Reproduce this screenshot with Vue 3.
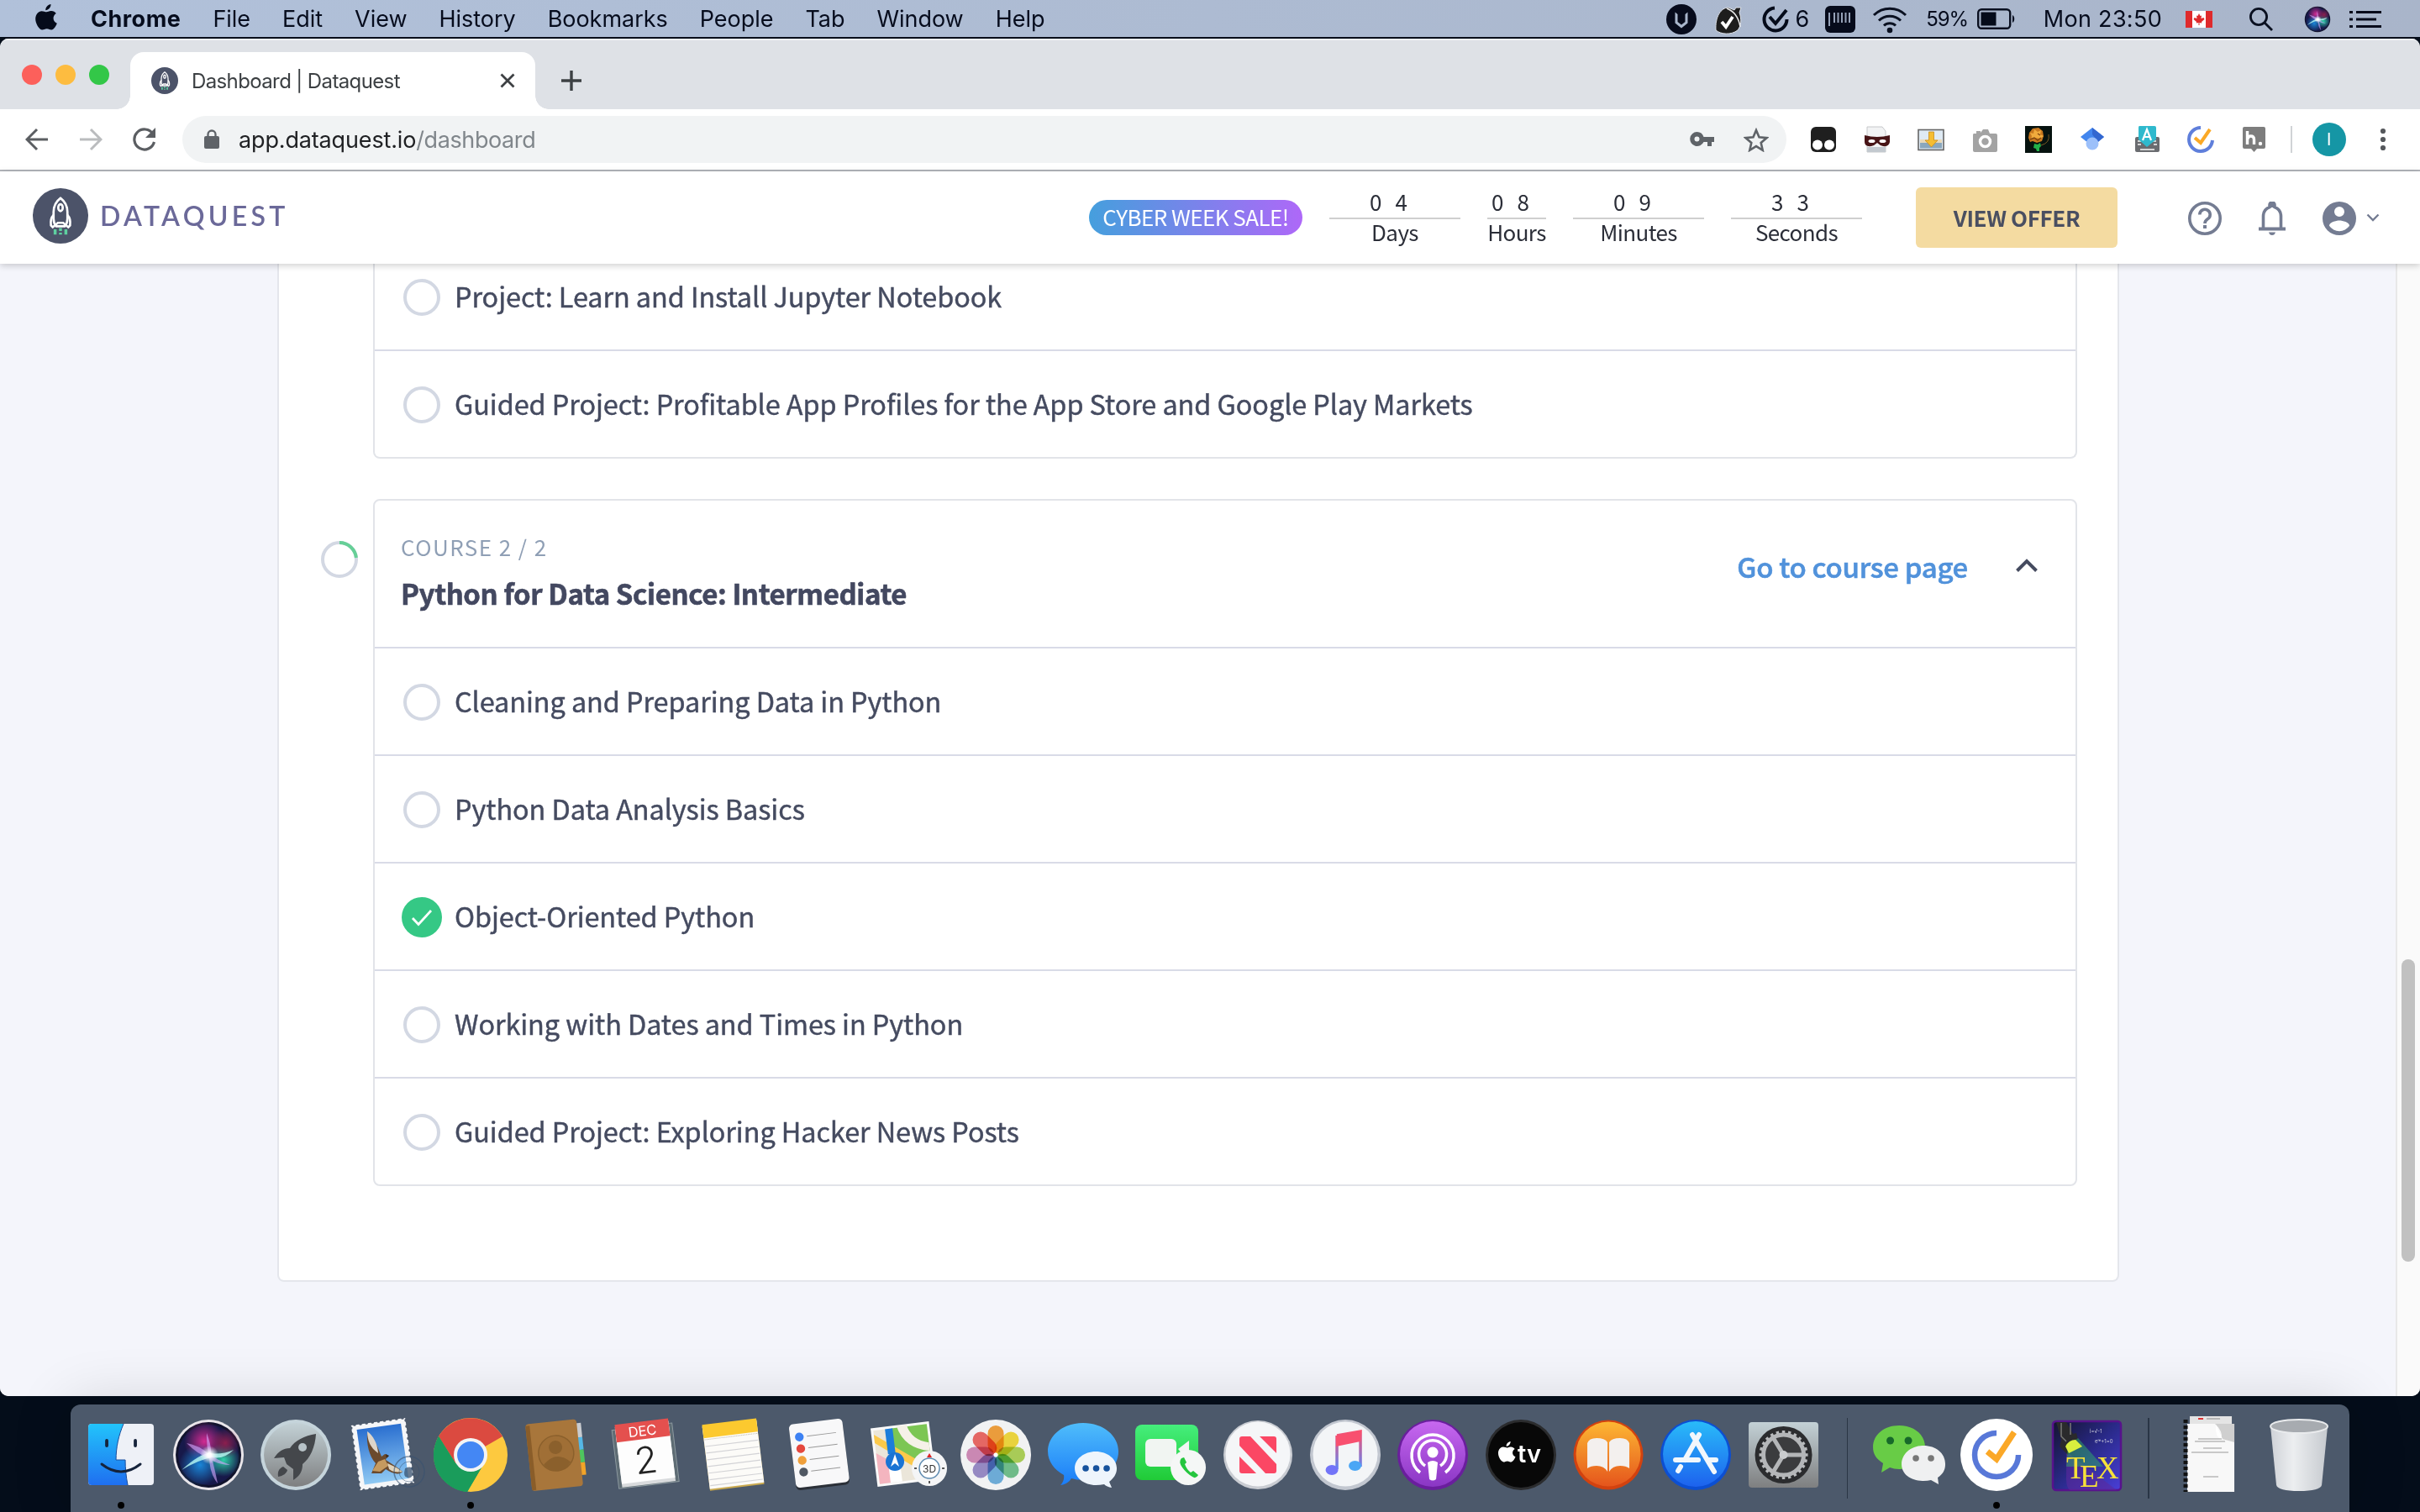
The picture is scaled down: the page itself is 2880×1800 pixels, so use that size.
<script setup>
const menus = ['File', 'Edit', 'View', 'History', 'Bookmarks', 'People', 'Tab', 'Window', 'Help']
const timers = [
  { digits: '04', label: 'Days', cls: 'wide' },
  { digits: '08', label: 'Hours', cls: 'narrow' },
  { digits: '09', label: 'Minutes', cls: 'wide' },
  { digits: '33', label: 'Seconds', cls: 'wide' },
]
const firstCourse = ['Project: Learn and Install Jupyter Notebook', 'Guided Project: Profitable App Profiles for the App Store and Google Play Markets']
const lessons = [
  { title: 'Cleaning and Preparing Data in Python' },
  { title: 'Python Data Analysis Basics' },
  { title: 'Object-Oriented Python', done: true },
  { title: 'Working with Dates and Times in Python' },
  { title: 'Guided Project: Exploring Hacker News Posts' },
]
const teeth = Array.from({ length: 24 }, (_, i) => i * 15)
const petals = ['#f7941d', '#f6d91f', '#a5cf3e', '#5dbb7c', '#5aa7dc', '#8d7cc3', '#cf7bb0', '#f0524d']
const perforation = Array.from({ length: 11 }, (_, i) => i)
</script>

<template>
  <div class="screen">
    <header class="menubar">
      <div class="menus">
        <svg class="apple" width="28" height="34" viewBox="0 0 28 34"><path d="M19.500 0c.3 3.600-2.900 7.200-6.200 7.200C12.900 3.900 16.200.4 19.500 0zM14.300 9.300c1.300 0 3.300-1.500 5.800-1.300 2.300.1 4.400 1.200 5.700 3.100-4.900 3.200-4 9.700 1 11.700-1 3-3.800 7.700-6.500 7.800-2.200.1-2.900-1.300-5.500-1.300s-3.500 1.300-5.600 1.300C5.700 30.500.9 22.900 1.200 17c.3-5.300 3.700-8.700 7.300-8.800 2.400 0 4.500 1.100 5.800 1.100z" fill="#050b1a"/></svg>
        <span class="menu app">Chrome</span>
        <span v-for="m in menus" :key="m" class="menu">{{ m }}</span>
      </div>
      <div class="status">
        <svg width="36" height="36" viewBox="0 0 36 36"><circle cx="18" cy="18" r="18" fill="#070b1c"/><path d="M10.500 9.500v13l7.500 6 7.500-6v-13l-3 2.500v9l-4.500 3.500-4.500-3.500v-9z" fill="#a9b6cc"/></svg>
        <svg class="s-hat" width="34" height="36" viewBox="0 0 34 36"><path d="M2 31C1 15 8 4 17 4l7 3 2-3h6l-2 6c3 8 2 16-2 21-8 6-20 5-26 0z" fill="#1d1d1d" stroke="#dfe3ea" stroke-width="1"/><path d="M15 5c8 3 14 10 16 22" stroke="#e9e9e9" stroke-width="1.500" fill="none"/><path d="M9 21l5 6 8-12" fill="none" stroke="#fff" stroke-width="3.800"/></svg>
        <svg class="s-tick" width="34" height="34" viewBox="0 0 34 34"><path d="M16 3.500A13.500 13.500 0 1 0 30.500 17" fill="none" stroke="#050b1a" stroke-width="4"/><path d="M10 14l7 8L30 6" fill="none" stroke="#050b1a" stroke-width="4"/></svg>
        <span class="six">6</span>
        <svg class="s-bar" width="36" height="32" viewBox="0 0 36 32"><rect width="36" height="32" rx="6" fill="#060b1b"/><path d="M5 8v16M11 8v12M15.500 8v12M20 8v12M24.500 8v12M29 8v12" stroke="#96a2b8" stroke-width="2"/></svg>
        <svg class="s-wifi" width="42" height="34" viewBox="0 0 42 34" fill="none" stroke="#0a1020" stroke-width="3"><path d="M2 12a27 27 0 0 1 38 0M8 18.500a18.500 18.500 0 0 1 26 0M14 24.500a10 10 0 0 1 14 0"/><circle cx="21" cy="30" r="1.800" fill="#0a1020"/></svg>
        <span class="pct">59%</span>
        <svg class="s-bat" width="46" height="26" viewBox="0 0 46 26"><rect x="1.200" y="1.200" width="38" height="22.600" rx="4" fill="none" stroke="#0a1020" stroke-width="2.400"/><rect x="4.500" y="4.500" width="18" height="16" fill="#050b1a"/><path d="M42 8c3 1 3 8 0 9z" fill="#0a1020"/></svg>
        <span class="clock">Mon 23:50</span>
        <svg class="s-flag" width="32" height="20" viewBox="0 0 32 20"><path fill="#fff" d="M0 0h32v20H0z"/><path fill="#df2a2c" d="M0 0h8v20H0zM24 0h8v20h-8zM16 3l1.500 3 1.500-.5-.5 3.500 3-1 1 2-3.500 3 .3 1.500-2.800-.5V17h-1v-3l-2.800.5.3-1.500-3.500-3 1-2 3 1-.5-3.500 1.500.5z"/></svg>
        <svg class="s-search" width="30" height="30" viewBox="0 0 30 30" fill="none" stroke="#0a1020" stroke-width="2.800"><circle cx="12" cy="12" r="9.600"/><path d="M19 19l9 9"/></svg>
        <svg class="s-siri" width="32" height="32" viewBox="11 11 82 82"><use href="#orb"/></svg>
        <svg width="38" height="22" viewBox="0 0 38 22"><path fill="#060b1b" d="M0 1h4v3H0zM8 1h30v3H8zM0 9.500h4v3H0zM8 9.500h24v3H8zM0 18h4v3H0zM8 18h30v3H8z"/></svg>
      </div>
    </header>

    <section class="window">
      <div class="tabstrip">
        <div class="lights"><i class="red"></i><i class="yellow"></i><i class="green"></i></div>
        <div class="tab">
          <svg width="32" height="32" viewBox="0 0 64 64"><use href="#dq"/></svg>
          <span class="tab-title">Dashboard | Dataquest</span>
          <svg class="tab-x" width="18" height="18" viewBox="0 0 18 18"><path d="M1.500 1.500l15 15m0-15l-15 15" stroke="#3d4043" stroke-width="2.800"/></svg>
        </div>
        <svg class="plus" width="24" height="24" viewBox="0 0 24 24"><path d="M12 0v24M0 12h24" stroke="#3c4043" stroke-width="3.400"/></svg>
      </div>

      <div class="toolbar">
        <svg width="28" height="28" viewBox="0 0 28 28" fill="none" stroke="#5b5e62" stroke-width="3"><path d="M27 14H3M14 2L2 14l12 12"/></svg>
        <svg class="fwd" width="28" height="28" viewBox="0 0 28 28" fill="none" stroke="#babcbe" stroke-width="3"><path d="M1 14h24M14 2l12 12-12 12"/></svg>
        <svg class="reload" width="28" height="28" viewBox="0 0 28 28" fill="none" stroke="#5b5e62" stroke-width="3.200"><path d="M24 7.500A12 12 0 1 0 25.500 17"/><path d="M27 0v12H15z" fill="#5b5e62" stroke="none"/></svg>
        <div class="omnibox">
          <svg width="18" height="24" viewBox="0 0 18 24"><rect y="8" width="18" height="15" rx="2" fill="#5f6368"/><path d="M4.500 9V6a4.500 4.500 0 0 1 9 0v3" fill="none" stroke="#5f6368" stroke-width="2.300"/></svg>
          <span class="url"><b>app.dataquest.io</b>/dashboard</span>
          <svg class="key" width="30" height="18" viewBox="0 0 30 18"><path fill="#5f6368" fill-rule="evenodd" d="M8.500 0a8.500 8.500 0 0 1 8 6H29v6h-3v5h-5v-5h-4.500A8.500 8.500 0 1 1 8.500 0zm0 5.500a3 3 0 1 0 0 6 3 3 0 0 0 0-6z"/></svg>
          <svg class="star" width="30" height="29" viewBox="0 0 30 29"><path d="M15 3l3.500 8.300 9 .8-6.800 5.900 2 8.800-7.700-4.700-7.700 4.700 2-8.800L2.500 12.100l9-.8z" fill="none" stroke="#5f6368" stroke-width="2.600"/></svg>
        </div>
        <div class="extensions">
          <svg width="32" height="32" viewBox="0 0 32 32"><rect x="1" y="1" width="30" height="30" rx="6" fill="#1f1f1f"/><circle cx="9" cy="22.500" r="6" fill="#fff"/><circle cx="23" cy="22.500" r="6" fill="#fff"/></svg>
          <svg width="32" height="32" viewBox="0 0 32 32"><path d="M4 1h18l4 5v25H4z" fill="#f2f3f4" stroke="#c6c8ca"/><path d="M4 25h22v6H4z" fill="#c3c9cf"/><path d="M1 11q15 4 30 0v8q-1 6-8 5-4-1-7-4-3 3-7 4-8 1-8-5z" fill="#471416"/><ellipse cx="9.500" cy="18" rx="4" ry="2" fill="#fff"/><ellipse cx="22.500" cy="18" rx="4" ry="2" fill="#fff"/></svg>
          <svg width="32" height="32" viewBox="0 0 32 32"><rect x="1" y="4.500" width="30" height="24" fill="#dfeaf4" stroke="#666" stroke-width="1.600"/><rect x="3" y="19" width="26" height="7.500" fill="#8aa7bd"/><path d="M3 16h26v4H3z" fill="#e9d9b8"/><path d="M13.500 7h6v10h4.500l-7.500 8-7.500-8h4.500z" fill="#f5bd32" stroke="#c98e1c" stroke-width=".8"/></svg>
          <svg width="32" height="32" viewBox="0 0 32 32"><path d="M3 9h3V6h5v2l3-4h6l2 5h7a2 2 0 0 1 2 2v18a2 2 0 0 1-2 2H4a2 2 0 0 1-2-2V11q0-2 1-2z" fill="#a3a3a3"/><circle cx="16.500" cy="18.500" r="6" fill="none" stroke="#fff" stroke-width="3.500"/></svg>
          <svg width="32" height="32" viewBox="0 0 32 32"><path d="M0 0h32v32H0z" fill="#06120f"/><path d="M4 14l1-6 4-5 7-1 5 4 1 6-2 6-6 2-5-2-3 1z" fill="#c8781f"/><path d="M6 8l4 1 1-5 4 3 4-2-1 5 4 2-4 3-6-1-5 2 1-4z" fill="#f0ab3d"/><path d="M6 16l5-2 4 3 4-3M15 9l3 2" stroke="#7d430f" stroke-width="1.400" fill="none"/><path d="M11 21l4 1 3-2 1 4-2 2v4h-3l-1-3-3-1z" fill="#23b04a"/><path d="M28 10q2 10-9 13" stroke="#7b5a24" fill="none"/></svg>
          <svg width="32" height="32" viewBox="0 0 32 32"><path d="M16 2l14 11-14 11L2 13z" fill="#4286ee"/><path d="M16 2l14 11-7 6-7-9z" fill="#3367d0"/><circle cx="16" cy="21" r="7.500" fill="#9cc0fa"/></svg>
          <svg width="32" height="32" viewBox="0 0 32 32"><rect x="2" y="13" width="29" height="18" rx="2" fill="#6a6c70"/><path d="M5 18h4m2 0h3m9 0h4M5 22h4m15 0h4M8 28h17" stroke="#d5d5d5" stroke-width="2.200"/><path d="M7 0h18a2 2 0 0 1 2 2v14L16 25 6 16V2q0-2 1-2z" fill="#2fb9cd"/><path d="M11 17l5-13 5 13M13 13h6" stroke="#fff" stroke-width="2.200" fill="none"/></svg>
          <svg width="32" height="32" viewBox="0 0 64 64"><path d="M32 4a28 28 0 1 0 28 30" fill="none" stroke="#5f7fdb" stroke-width="8"/><path d="M18 28l14 12L54 8" fill="none" stroke="#fba926" stroke-width="8"/></svg>
          <svg width="32" height="32" viewBox="0 0 32 32"><path d="M4 1h23a2 2 0 0 1 2 2v22a2 2 0 0 1-2 2h-8l-3.500 4L12 27H4a2 2 0 0 1-2-2V3q0-2 2-2z" fill="#7d7d7d"/><path d="M7.500 6v16M7.500 16q1-4 4-4 4 0 4 4v6" stroke="#fff" stroke-width="3.400" fill="none"/><circle cx="23" cy="21" r="2.200" fill="#fff"/></svg>
        </div>
        <i class="bar-sep"></i>
        <span class="profile">I</span>
        <svg class="dots" width="8" height="28" viewBox="0 0 8 28" fill="#55585c"><circle cx="4" cy="4" r="3.100"/><circle cx="4" cy="14" r="3.100"/><circle cx="4" cy="24" r="3.100"/></svg>
      </div>

      <div class="site-header">
        <svg width="66" height="66" viewBox="0 0 64 64"><use href="#dq"/></svg>
        <span class="brand">DATAQUEST</span>
        <span class="pill">CYBER WEEK SALE!</span>
        <div class="timers">
          <div v-for="t in timers" :key="t.label" class="timer" :class="t.cls">
            <span class="digits">{{ t.digits }}</span>
            <span class="unit">{{ t.label }}</span>
          </div>
        </div>
        <span class="offer">VIEW OFFER</span>
        <svg class="help" width="40" height="40" viewBox="0 0 40 40" fill="none" stroke="#747c92" stroke-width="3.600"><circle cx="20" cy="20" r="18.200"/><path d="M13.800 15.500a6.200 6.200 0 1 1 9.400 5.300c-2 1.300-3.200 2.300-3.200 5.200"/><path d="M18 28h4v4h-4z" fill="#747c92" stroke="none"/></svg>
        <svg class="bell" width="32" height="40" viewBox="0 0 32 40"><path d="M5.500 32V17.500q0-8 7.500-11V4a3 3 0 0 1 6 0v2.500q7.500 3 7.500 11V32" fill="none" stroke="#747c92" stroke-width="3.600"/><path d="M0 30.500h32v4H0zM12 36.500h8q-1 3.500-4 3.500t-4-3.500zM13 2h6v5h-6z" fill="#747c92"/></svg>
        <svg class="user" width="40" height="40" viewBox="0 0 40 40"><path fill="#747c92" fill-rule="evenodd" d="M20 0a20 20 0 1 1 0 40 20 20 0 0 1 0-40zm0 6a6 6 0 1 0 0 12 6 6 0 0 0 0-12zm0 16.500c-4 0-12 2.200-12 6.300a14.500 14.500 0 0 0 24 0c0-4.100-8-6.300-12-6.300z"/></svg>
        <svg class="down" width="16" height="12" viewBox="0 0 16 12"><path d="M1.500 2.500L8 9l6.500-6.500" fill="none" stroke="#747c92" stroke-width="2.400"/></svg>
      </div>

      <div class="viewport">
        <main class="page">
          <div class="card">
            <div class="course first">
              <div v-for="t in firstCourse" :key="t" class="row"><i class="ring"></i><span>{{ t }}</span></div>
            </div>
            <div class="course-wrap">
              <svg class="progress" width="44" height="44" viewBox="0 0 44 44" fill="none" stroke-width="4"><circle cx="22" cy="22" r="20" stroke="#d3d8e3"/><path d="M22 2a20 20 0 0 1 19.900 18" stroke="#66cf97"/></svg>
              <div class="course">
                <div class="course-head">
                  <div class="course-name">
                    <span class="eyebrow">COURSE 2 / 2</span>
                    <span class="title">Python for Data Science: Intermediate</span>
                  </div>
                  <span class="link">Go to course page</span>
                  <svg class="up" width="28" height="20" viewBox="0 0 28 20"><path d="M2.500 16.500L14 5l11.500 11.500" fill="none" stroke="#454b5f" stroke-width="4"/></svg>
                </div>
                <div v-for="l in lessons" :key="l.title" class="row">
                  <svg v-if="l.done" class="done" width="48" height="48" viewBox="0 0 48 48"><circle cx="24" cy="24" r="24" fill="#35c885"/><path d="M13 25l7 7.500L35 16" fill="none" stroke="#fff" stroke-width="2.800"/></svg>
                  <i v-else class="ring"></i>
                  <span>{{ l.title }}</span>
                </div>
              </div>
            </div>
          </div>
        </main>
        <div class="scroll"><i class="thumb"></i></div>
      </div>
    </section>

    <nav class="dock">
      <svg class="app-ico" viewBox="0 0 104 104">
        <rect x="13" y="15" width="78" height="73" rx="4" fill="#eef1f7"/><path d="M17 15h38c-6 14-9 28-9 43h11c0 10 1 20 3 30H17a4 4 0 0 1-4-4V19a4 4 0 0 1 4-4z" fill="url(#finder)"/><path d="M55 15c-6 14-9 28-9 43h11c0 10 1 20 3 30" fill="none" stroke="#1b4f9e" stroke-width="1"/><path d="M35 35v6M69 35v6" stroke="#15233b" stroke-width="3.800" stroke-linecap="round"/><path d="M29 63q23 18 46 0" fill="none" stroke="#15233b" stroke-width="3" stroke-linecap="round"/>
        <circle cx="52" cy="112" r="4" fill="#000"/>
      </svg>
      <svg class="app-ico" viewBox="0 0 104 104">
        <circle cx="52" cy="52" r="42" fill="#e9e6ea"/><use href="#orb"/>
      </svg>
      <svg class="app-ico" viewBox="0 0 104 104">
        <circle cx="52" cy="52" r="42" fill="#c5d4db"/><circle cx="52" cy="52" r="38" fill="url(#steel)"/><path d="M76 27c-14 2-25 8-31 17-8 0-14 4-19 12l12-1 3 8 8 6 0 13c8-5 11-11 11-19 9-7 15-20 16-36z" fill="#44474b"/><circle cx="60" cy="43" r="5" fill="#b7c2c7"/><path d="M37 66c-5 2-7 6-6 12 6-1 10-4 11-8z" fill="#44474b"/>
      </svg>
      <svg class="app-ico" viewBox="-2 0 104 104">
        <g transform="rotate(-8 50 52)"><rect x="17" y="12" width="65" height="78" fill="#f5f6f8"/><g fill="#4c596b"><circle v-for="p in perforation" :key="'l' + p" cx="16.500" :cy="15 + p * 7.200" r="1.800"/><circle v-for="p in perforation" :key="'r' + p" cx="82.500" :cy="15 + p * 7.200" r="1.800"/><circle v-for="p in 9" :key="'t' + p" :cx="14 + p * 7.200" cy="11.500" r="1.800"/><circle v-for="p in 9" :key="'b' + p" :cx="14 + p * 7.200" cy="90.500" r="1.800"/></g><rect x="23" y="18" width="53" height="66" fill="url(#sky)"/></g>
        <path d="M31 25c5 4 8 10 12 17l5 12 4-3 3 1-2 6c6 4 13 8 20 14-3 4-12 3-20-3l-5 5-12 0 5-12c-8-9-11-23-10-37z" fill="#6b4a2d"/><path d="M31 24c7 5 12 14 13 26-9-6-13-15-13-26z" fill="#ded5c9"/><path d="M44 60l8-3 4 8-10 7-9-1z" fill="#c59a60"/><path d="M55 62q10 4 18 10-10 2-16-3z" fill="#e0d3bb"/><path d="M53 51l4 2-3 3z" fill="#3c2818"/>
        <circle cx="81" cy="72" r="18" fill="none" stroke="#38516f" stroke-width="1.500" opacity=".6"/><circle cx="81" cy="72" r="12" fill="none" stroke="#38516f" opacity=".5"/><path d="M76 68q5-3 10 0-3 4 0 7-4 6-7 4-6 0-3-11z" fill="#38516f" opacity=".75"/>
      </svg>
      <svg class="app-ico" viewBox="0 0 104 104">
        <circle cx="52" cy="52" r="44" fill="#fdc93f"/><path d="M52 52L14 30a44 44 0 0 1 76 0z" fill="#db4a40"/><path d="M52 32h35A44 44 0 0 0 14 30l20 32z" fill="#db4a40"/><path d="M14 30a44 44 0 0 0 34 66l20-34H34z" fill="#149a58"/><path d="M14 30a44 44 0 0 0 34 66l20-34-16 10-18-10z" fill="#1a9c5b"/><circle cx="52" cy="52" r="20" fill="#f4f4f4"/><circle cx="52" cy="52" r="16" fill="#4487f4"/>
        <circle cx="52" cy="112" r="4" fill="#000"/>
      </svg>
      <svg class="app-ico" viewBox="0 0 104 104">
        <g transform="rotate(-6 50 52)"><path d="M74 17h9v17h-9z" fill="#c9ccd0"/><path d="M74 34h9v15h-9z" fill="#55b7e6"/><path d="M74 49h9v15h-9z" fill="#4ec55e"/><path d="M74 64h9v15h-9z" fill="#f2a428"/><rect x="17" y="12" width="61" height="80" rx="4" fill="#a8763b"/><path d="M17 14h5v77h-5z" fill="#8a5d29"/><circle cx="50" cy="50" r="21" fill="#a06f36" stroke="#8b602c" stroke-width="1.500"/><circle cx="50" cy="43" r="8" fill="#8b602c"/><path d="M34 62q16-16 32 0-6 9-16 9t-16-9z" fill="#8b602c"/></g>
      </svg>
      <svg class="app-ico" viewBox="0 0 104 104">
        <g transform="rotate(-7 52 52)"><path d="M15 18h72v70H15z" fill="#5e6c74" stroke="#8d9aa0"/><path d="M19 15h64v72H19z" fill="#d9dbdd"/><path d="M19 15h64v68H19z" fill="#fdfdfd"/><path d="M19 12h64v21H19z" fill="#e4504e"/><text x="51" y="29" text-anchor="middle" font-size="16.500" fill="#fff">DEC</text><text x="51" y="74" text-anchor="middle" font-size="44" font-weight="300" fill="#222">2</text></g>
      </svg>
      <svg class="app-ico" viewBox="0 0 104 104">
        <g transform="rotate(-7 52 52)"><path d="M19 14h65v77H19z" fill="#c9a94f"/><path d="M19 14h65v75H19z" fill="#fcfbf8"/><path d="M19 12h65v16H19z" fill="#fcc92f"/><path d="M20 30h63" stroke="#b9b4a6" stroke-dasharray="1 1"/><path d="M20 38h63M20 46h63M20 54h63M20 62h63M20 70h63M20 78h63M20 85h63" stroke="#d3d3d6" stroke-width="1.200"/></g>
      </svg>
      <svg class="app-ico" viewBox="-2 0 104 104">
        <g transform="rotate(-7 48 52)"><rect x="16" y="14" width="64" height="77" rx="5" fill="#2b3038"/><rect x="16" y="12" width="64" height="76" rx="5" fill="#f8f8f9"/><g stroke="#999" stroke-width="1"><path d="M36 28h35M36 42h35M36 56h35M36 70h35"/></g><circle cx="27" cy="28" r="5.200" fill="#3e82f3"/><circle cx="27" cy="42" r="5.200" fill="#e5483e"/><circle cx="27" cy="56" r="5.200" fill="#f0a03b"/><circle cx="27" cy="70" r="5.200" fill="#505863"/></g>
      </svg>
      <svg class="app-ico" viewBox="2 0 104 104">
        <g transform="rotate(-7 48 52)"><path d="M13 16h70v70H13z" fill="#fafafa"/><path d="M16 19h64v64H16z" fill="#ebe6da"/><path d="M38 19h42v40H38z" fill="#7cc654"/><path d="M44 17q6 28 36 34v-10Q60 36 56 17z" fill="#f5f1e8"/><path d="M16 34l64 50V72L16 24z" fill="#fcc94a"/><path d="M16 46l14 10v27H16z" fill="#f4b5bf"/><path d="M30 19h9v30h-9z" fill="#1b7ddb"/><path d="M29 60h14v23H29z" fill="#fff"/></g><circle cx="38" cy="60" r="11" fill="#1a74d4"/><path d="M38 51l5 15-5-4-5 4z" fill="#fff"/><circle cx="79" cy="68" r="21" fill="#f4f5f6"/><circle cx="79" cy="68" r="12" fill="#fff" stroke="#5e8bb0" stroke-width="1.500"/><path d="M79 50l3 5h-6z" fill="#d22"/><path d="M61 68h3M94 68h3M79 83v3" stroke="#222" stroke-width="1.500"/><text x="79" y="72.500" text-anchor="middle" font-size="12" fill="#333">3D</text>
      </svg>
      <svg class="app-ico" viewBox="0 0 104 104">
        <circle cx="52" cy="52" r="42" fill="#f1f2f3"/><g class="petals"><rect v-for="(c, i) in petals" :key="c" x="42.500" y="17" width="19" height="33" rx="9.500" :fill="c" :transform="`rotate(${i * 45} 52 52)`"/></g><circle cx="52" cy="52" r="2.500" fill="#fff"/>
      </svg>
      <svg class="app-ico" viewBox="0 0 104 104">
        <path d="M52 14c24 0 42 15 42 34S76 82 52 82q-8 0-14-2-4 7-13 8 5-5 4-12C18 70 10 60 10 48c0-19 18-34 42-34z" fill="url(#msg)"/><path d="M67 48c14 0 25 9 25 20 0 7-4 12-9 16l3 7q-6-1-9-4-5 1-10 1c-14 0-25-9-25-20s11-20 25-20z" fill="#eef5fc"/><circle cx="55" cy="68" r="3.800" fill="#16529d"/><circle cx="67.500" cy="68" r="3.800" fill="#16529d"/><circle cx="80" cy="68" r="3.800" fill="#16529d"/>
      </svg>
      <svg class="app-ico" viewBox="0 0 104 104">
        <rect x="10" y="16" width="75" height="66" rx="8" fill="url(#ft)"/><rect x="22" y="33" width="37" height="33" rx="6" fill="#f1f5f2"/><path d="M61 45l13-10v26z" fill="#f1f5f2"/><circle cx="73" cy="67" r="21" fill="#f5f7f6"/><path d="M65 56q-4 4 1 11t12 11q4 3 7-2l-6-5-3 2q-5-4-7-10l2-2-3-6z" fill="#25c63f"/>
      </svg>
      <svg class="app-ico" viewBox="0 0 104 104">
        <circle cx="52" cy="52" r="41" fill="#c9ccd2"/><circle cx="52" cy="51" r="38.500" fill="#f5f6f8"/><path d="M54 30h17a3 3 0 0 1 3 3v17zM30 54l20 20H33a3 3 0 0 1-3-3z" fill="#fb4764"/><path d="M30 33a3 3 0 0 1 3-3h10l31 33v8a3 3 0 0 1-3 3H61L30 41z" fill="#fb4764"/>
      </svg>
      <svg class="app-ico" viewBox="0 0 104 104">
        <circle cx="52" cy="52" r="42" fill="#c2c7d0"/><circle cx="52" cy="51" r="38.500" fill="#f3f5f7"/><path d="M42 29l28-5v42M42 69V29" stroke="url(#note)" stroke-width="3.500" fill="none"/><path d="M41 29l29-6v13l-29 6z" fill="#f8506f"/><ellipse cx="36" cy="70" rx="7.500" ry="6" fill="#7274f8"/><ellipse cx="63.500" cy="65" rx="7.500" ry="6" fill="#4ba6f5"/>
      </svg>
      <svg class="app-ico" viewBox="0 0 104 104">
        <circle cx="52" cy="52" r="42" fill="#6a1e9d"/><circle cx="52" cy="51" r="39" fill="url(#pod)"/><g fill="none" stroke="#fff" stroke-width="3.500"><path d="M37 73a25 25 0 1 1 30 0"/><path d="M43 65a16.500 16.500 0 1 1 18 0"/></g><circle cx="52" cy="49" r="6.500" fill="#fff"/><path d="M46 61q6-4 12 0l-2 20q-4 3-8 0z" fill="#fff"/>
      </svg>
      <svg class="app-ico" viewBox="0 0 104 104">
        <circle cx="52" cy="52" r="42" fill="#2b2c2e"/><circle cx="52" cy="52" r="39" fill="#080808"/><g transform="translate(24 36) scale(.8)"><path d="M19.500 0c.3 3.600-2.900 7.200-6.200 7.200C12.900 3.900 16.200.4 19.500 0zM14.300 9.300c1.300 0 3.300-1.500 5.800-1.300 2.300.1 4.400 1.200 5.700 3.100-4.900 3.200-4 9.700 1 11.700-1 3-3.800 7.700-6.500 7.800-2.200.1-2.900-1.300-5.500-1.300s-3.500 1.300-5.600 1.300C5.700 30.500.9 22.900 1.200 17c.3-5.300 3.700-8.700 7.300-8.800 2.400 0 4.500 1.100 5.800 1.100z" fill="#fff"/></g><text x="48" y="61" font-size="29" font-weight="600" fill="#fff">tv</text>
      </svg>
      <svg class="app-ico" viewBox="0 0 104 104">
        <circle cx="52" cy="52" r="41.500" fill="#d2420f"/><circle cx="52" cy="51" r="38.500" fill="url(#book)"/><path d="M27 38q2-6 11-6 10 0 13 5v35q-4-7-13-7-7 0-11 3zM77 38q-2-6-11-6-10 0-13 5v35q4-7 13-7 7 0 11 3z" fill="#f3f0ee"/>
      </svg>
      <svg class="app-ico" viewBox="0 0 104 104">
        <circle cx="52" cy="52" r="42" fill="#0c4fd2"/><circle cx="52" cy="51" r="39" fill="url(#store)"/><g stroke="#f2f7fc" stroke-width="6" stroke-linecap="round"><path d="M56 28L39 58M48 28l26 44M28 58h27M68 58h8M34 66l-3 5"/></g>
      </svg>
      <svg class="app-ico" viewBox="0 0 104 104">
        <rect x="11" y="13" width="83" height="78" rx="4" fill="url(#steel)"/><circle cx="52.500" cy="52" r="34" fill="#2b2c2e"/><g stroke="#b9bbbd" stroke-width="3.500"><path v-for="a in teeth" :key="a" d="M52.500 23v7" :transform="`rotate(${a} 52.500 52)`"/></g><circle cx="52.500" cy="52" r="24" fill="#3b3c3e" stroke="#b4b6b8" stroke-width="5"/><path d="M52.500 52h22M52.500 52L41 33M52.500 52L41 71" stroke="#b4b6b8" stroke-width="5"/><circle cx="52.500" cy="52" r="5" fill="#caccce"/>
      </svg>
      <i class="dock-sep"></i>
      <svg class="app-ico" viewBox="0 0 104 104">
        <path d="M40 17c18 0 31 11 31 26S58 69 40 69q-6 0-11-2l-10 6 2-11C13 57 9 51 9 43c0-15 13-26 31-26z" fill="#68cc46"/><circle cx="29.500" cy="35" r="4.500" fill="#17692a"/><circle cx="51" cy="35" r="4.500" fill="#17692a"/><path d="M69 41c15 0 26 9 26 22 0 7-3 12-9 16l1 8-9-5q-4 1-9 1c-15 0-26-8-26-20s11-22 26-22z" fill="#eff0f1"/><circle cx="60" cy="56" r="3.800" fill="#777"/><circle cx="78" cy="56" r="3.800" fill="#777"/>
      </svg>
      <svg class="app-ico" viewBox="0 0 104 104">
        <circle cx="52" cy="52" r="43" fill="#fff"/><path d="M52 26a26 26 0 1 0 26 26" fill="none" stroke="#5878d8" stroke-width="6.500"/><path d="M41 48l11 9 21-32" fill="none" stroke="#fba827" stroke-width="7"/>
        <circle cx="52" cy="112" r="4" fill="#000"/>
      </svg>
      <svg class="app-ico" viewBox="-5 0 104 104">
        <rect x="10" y="12" width="81" height="82" rx="4" fill="url(#tex)" stroke="#57138c" stroke-width="2.500"/><path d="M26 48l60 46H30q-5-4-4-20z" fill="#5c2a9c" opacity=".6"/><path d="M14 13h12l8 14 4-1 2 8-12 18-10-10 2-8z" fill="#2a2a2c"/><path d="M20 14v16l6 6M31 14v14" stroke="#777" stroke-width="1.500" fill="none"/><path d="M28 40l12-8 30 34H26z" fill="#2fae6a" opacity=".5"/><path d="M25 42q4-8 12-8l8 8-16 8z" fill="#d9ef3e"/><text class="tex" x="26" y="80">T</text><text class="tex" x="42" y="90">E</text><text class="tex" x="62" y="80">X</text><text x="54" y="26" font-size="6" fill="#ccd">i=√-1</text><text x="60" y="38" font-size="6" fill="#ccd">eⁱᵖ+1=0</text>
      </svg>
      <i class="dock-sep second"></i>
      <svg class="app-ico" viewBox="-4 0 104 104">
        <path d="M22 6h50v20H22z" fill="#e4e4e4"/><path d="M32 9h6" stroke="#d33" stroke-width="2"/><path d="M42 9h16" stroke="#888"/><path d="M19 15h56v81H19z" fill="#f8f8f8"/><path d="M52 15h23v22q-14-4-15-4 1-10-8-18z" fill="#cfcfcf"/><path d="M53 16l8 17q-9 0-8-17z" fill="#fff"/><path d="M17 10v86" stroke="#111" stroke-width="5" stroke-dasharray="4 3"/><path d="M32 33h28M28 36h36M38 44h22M24 49h44M38 78h18" stroke="#999" stroke-width="1"/>
      </svg>
      <svg class="app-ico" viewBox="0 0 104 104">
        <path d="M18 18l7 70q2 7 27 7t27-7l7-70z" fill="url(#bin)"/><ellipse cx="52" cy="18" rx="34" ry="8" fill="#a7abb0" stroke="#e9ebed" stroke-width="2"/>
      </svg>
    </nav>

    <svg class="defs" width="0" height="0">
      <defs>
        <g id="dq"><circle cx="32" cy="32" r="32" fill="#4c5369"/><g fill="none" stroke="#fff" stroke-width="2.600"><path d="M32 11.500q-8 6-8 16v8q0 5 3 8.500h10q3-3.500 3-8.500v-8q0-10-8-16z"/><path d="M24 31q-4 4-3 12l2 2 6-5h6l6 5 2-2q1-8-3-12"/><ellipse cx="32" cy="22.500" rx="2.600" ry="4"/></g><path d="M25.800 47.500v6M32 46v3.500M32 51.500v2M38.200 47.500v6" stroke="#5ed0a0" stroke-width="3.400"/></g>
        <g id="orb"><circle cx="52" cy="52" r="39" fill="#11132d"/><circle cx="52" cy="52" r="36" fill="#17194a"/><circle cx="47" cy="36" r="24" fill="url(#pink)"/><circle cx="42" cy="64" r="25" fill="url(#blue)"/><circle cx="70" cy="58" r="20" fill="url(#teal)"/><circle cx="72" cy="38" r="18" fill="url(#wine)"/><path d="M20 70q22-20 34-20 14 2 28-4-12 12-26 9Q40 58 20 70z" fill="#b9fbf5" opacity=".8"/><path d="M50 26q6 16 5 26 4 14 8 34-10-12-10-32-4-14-3-28zM26 38q14 2 28 14 12 8 24 12-16 0-27-9-12-4-25-17z" fill="#d9a8ff" opacity=".6"/><circle cx="53" cy="52" r="11" fill="url(#flare)"/></g>
        <radialGradient id="pink"><stop offset="0" stop-color="#d12b92"/><stop offset="1" stop-color="#d12b92" stop-opacity="0"/></radialGradient>
        <radialGradient id="blue"><stop offset="0" stop-color="#1a86d8"/><stop offset="1" stop-color="#1a86d8" stop-opacity="0"/></radialGradient>
        <radialGradient id="teal"><stop offset="0" stop-color="#2fd0a8"/><stop offset="1" stop-color="#2fd0a8" stop-opacity="0"/></radialGradient>
        <radialGradient id="wine"><stop offset="0" stop-color="#8c1f4e"/><stop offset="1" stop-color="#8c1f4e" stop-opacity="0"/></radialGradient>
        <radialGradient id="flare"><stop offset=".2" stop-color="#fff"/><stop offset="1" stop-color="#fff" stop-opacity="0"/></radialGradient>
        <linearGradient id="finder" x2="0" y2="1"><stop offset="0" stop-color="#22c4fb"/><stop offset="1" stop-color="#1f6ff0"/></linearGradient>
        <linearGradient id="steel" x2="0" y2="1"><stop offset="0" stop-color="#c3d1d6"/><stop offset="1" stop-color="#7e7f80"/></linearGradient>
        <linearGradient id="sky" x2="0" y2="1"><stop offset="0" stop-color="#2a6fd0"/><stop offset="1" stop-color="#8fc9f3"/></linearGradient>
        <linearGradient id="msg" x2="0" y2="1"><stop offset="0" stop-color="#4fbdfb"/><stop offset="1" stop-color="#1a7cf8"/></linearGradient>
        <linearGradient id="ft" x2="0" y2="1"><stop offset="0" stop-color="#45ee7c"/><stop offset="1" stop-color="#20cb37"/></linearGradient>
        <linearGradient id="note" x2="0" y2="1"><stop offset="0" stop-color="#f8506f"/><stop offset="1" stop-color="#5b86f6"/></linearGradient>
        <linearGradient id="pod" x2="0" y2="1"><stop offset="0" stop-color="#c768f0"/><stop offset="1" stop-color="#8a36c4"/></linearGradient>
        <linearGradient id="book" x2="0" y2="1"><stop offset="0" stop-color="#fdb733"/><stop offset="1" stop-color="#e5551c"/></linearGradient>
        <linearGradient id="store" x2="0" y2="1"><stop offset="0" stop-color="#29bbf9"/><stop offset="1" stop-color="#1d62ee"/></linearGradient>
        <linearGradient id="tex" x2="1" y2="1"><stop offset="0" stop-color="#14132e"/><stop offset=".5" stop-color="#2a2a8a"/><stop offset="1" stop-color="#4a3fd8"/></linearGradient>
        <linearGradient id="bin"><stop offset="0" stop-color="#cfd2d7"/><stop offset=".4" stop-color="#eceef0"/><stop offset="1" stop-color="#c6cacf"/></linearGradient>
      </defs>
    </svg>
  </div>
</template>

<style>
body { margin: 0; overflow: hidden; }
</style>

<style scoped>
.screen { position: relative; width: 2880px; height: 1800px; overflow: hidden; display: flex; flex-direction: column; background: #040d1a; font-family: "Inter", "Noto Sans", sans-serif; }
.screen svg { flex: none; display: block; }
.defs { position: absolute; }

.menubar { flex: none; height: 44px; box-sizing: border-box; display: flex; justify-content: space-between; align-items: center; padding: 1px 46px 0 41px; background: linear-gradient(90deg, #b1c1da, #a9b5ca); color: #060c1d; font-size: 27px; }
.menus { display: flex; align-items: center; gap: 38px; }
.apple { margin: -2px 1px 0 0; }
.menu { line-height: 44px; white-space: nowrap; letter-spacing: -.03px; }
.menu.app { font-weight: 700; letter-spacing: .5px; }
.status { display: flex; align-items: center; white-space: nowrap; line-height: 44px; }
.s-hat { margin-left: 21px; }
.s-tick { margin-left: 22px; }
.six { margin-left: 7px; }
.s-bar { margin-left: 19px; }
.s-wifi { margin-left: 20px; }
.pct { margin-left: 22px; font-size: 24px; letter-spacing: -1.200px; }
.s-bat { margin-left: 11px; }
.clock { margin-left: 33px; letter-spacing: .3px; }
.s-flag { margin-left: 28px; }
.s-search { margin-left: 43px; }
.s-siri { margin: 0 22px 0 36px; }

.window { flex: none; margin-top: 2px; height: 1616px; display: flex; flex-direction: column; overflow: hidden; border-radius: 10px; background: #fff; }
.tabstrip { flex: none; height: 84px; display: flex; background: #dee1e6; box-shadow: inset 0 2px 0 #eef0f2; }
.lights { width: 155px; box-sizing: border-box; padding: 31px 0 0 26px; display: flex; gap: 16px; }
.lights i { width: 24px; height: 24px; border-radius: 50%; }
.red { background: #fc605b; }
.yellow { background: #fdbc40; }
.green { background: #33c748; }
.tab { position: relative; margin-top: 16px; width: 482px; height: 68px; box-sizing: border-box; padding: 0 24px 0 25px; display: flex; align-items: center; background: #fff; border-radius: 16px 16px 0 0; }
.tab::before, .tab::after { content: ""; position: absolute; bottom: 0; width: 16px; height: 16px; }
.tab::before { left: -16px; background: radial-gradient(circle at 0 0, transparent 15.500px, #fff 16px); }
.tab::after { right: -16px; background: radial-gradient(circle at 100% 0, transparent 15.500px, #fff 16px); }
.tab-title { flex: 1; margin-left: 16px; font-size: 24px; letter-spacing: -.62px; color: #3c4043; white-space: nowrap; }
.plus { margin: 38px 0 0 31px; }

.toolbar { flex: none; height: 74px; box-sizing: border-box; border-bottom: 2px solid #b4b7bc; display: flex; align-items: center; padding-left: 30px; }
.fwd { margin-left: 36px; }
.reload { margin-left: 36px; }
.omnibox { margin-left: 31px; width: 1909px; height: 56px; box-sizing: border-box; border-radius: 28px; background: #f1f3f4; display: flex; align-items: center; padding: 0 21px 0 26px; }
.url { flex: 1; margin-left: 23px; font-size: 27px; letter-spacing: -.4px; color: #80868b; }
.url b { font-weight: 400; letter-spacing: -.15px; color: #202124; }
.key { margin-right: 34px; }
.extensions { margin-left: 28px; display: flex; gap: 32.100px; }
.bar-sep { margin-left: 27px; width: 2px; height: 32px; background: #d0d3d6; }
.profile { margin-left: 24px; width: 40px; height: 40px; border-radius: 50%; background: #1596a5; color: #fff; font-size: 20px; line-height: 40px; text-align: center; }
.dots { margin-left: 40px; }

.site-header { position: relative; z-index: 2; flex: none; height: 110px; display: flex; align-items: center; background: #fff; box-shadow: 0 2px 8px rgba(0, 0, 0, .2); padding-left: 39px; font-family: "Noto Sans CJK SC", "Noto Sans", sans-serif; color: #2b2e38; }
.site-header svg { margin-top: -4px; }
.brand { width: 1177px; margin: -6px 0 0 14px; font-family: "Lato", sans-serif; font-size: 32px; font-weight: 600; letter-spacing: 4.300px; color: #6b6999; }
.pill { width: 254px; height: 42px; border-radius: 21px; background: linear-gradient(90deg, #459fdd, #ae68f8); color: #fff; font-size: 26px; line-height: 39px; letter-spacing: -.55px; text-align: center; white-space: nowrap; }
.timers { display: flex; gap: 32px; margin-left: 32px; }
.timer { display: flex; flex-direction: column; align-items: center; font-size: 26px; }
.wide { width: 156px; }
.narrow { width: 70px; }
.digits { align-self: stretch; height: 38px; line-height: 37px; border-bottom: 2px solid #cfcfcf; letter-spacing: 16px; text-indent: 1px; text-align: center; white-space: nowrap; }
.unit { height: 36px; line-height: 29px; letter-spacing: -.6px; }
.offer { margin-left: 64px; width: 240px; height: 72px; border-radius: 6px; background: #f4dba1; color: #4a4f61; font-weight: 700; font-size: 26px; line-height: 72px; letter-spacing: -.4px; text-align: center; }
.site-header .help { margin: 2px 0 0 84px; }
.site-header .bell { margin: 2px 0 0 44px; }
.site-header .user { margin: 2px 0 0 44px; }
.site-header .down { margin: 0 0 0 12px; }

.viewport { flex: 1; display: flex; min-height: 0; font-family: "Noto Sans CJK SC", "Noto Sans", sans-serif; }
.page { flex: 1; background: #f4f5fb; overflow: hidden; }
.card { margin-left: 330px; width: 2192px; height: 1212px; box-sizing: border-box; border: 2px solid #e4e6ec; border-top: 0; border-radius: 0 0 8px 8px; background: #fff; padding: 0 48px 0 112px; }
.course { box-sizing: border-box; width: 2028px; border: 2px solid #e2e4e9; border-radius: 8px; }
.course.first { border-top: 0; border-radius: 0 0 8px 8px; }
.course.first .row:first-child { height: 102px; border-top: 0; padding-bottom: 24px; }
.row { height: 128px; box-sizing: border-box; border-top: 2px solid #d9dbe7; display: flex; align-items: center; padding: 2px 0 0 34px; font-size: 32.400px; color: #454b60; letter-spacing: -.06px; -webkit-text-stroke: .45px #454b60; white-space: nowrap; }
.row span { margin-bottom: 6px; }
.ring { width: 36px; height: 36px; border: 4px solid #d3d8e3; border-radius: 50%; margin-right: 17px; }
.done { margin: 0 15px 0 -2px; }
.course-wrap { position: relative; margin-top: 48px; }
.progress { position: absolute; left: -62px; top: 50px; }
.course-head { height: 174px; box-sizing: border-box; display: flex; align-items: center; padding: 0 44px 4px 31px; }
.course-name { flex: 1; display: flex; flex-direction: column; }
.eyebrow { margin-top: -1px; font-size: 26px; line-height: 40px; letter-spacing: 1.450px; color: #8f9fb5; }
.title { margin-top: 11px; font-size: 33px; line-height: 48px; font-weight: 700; letter-spacing: -.4px; color: #434860; -webkit-text-stroke: .6px #434860; }
.link { margin: -14px 56px 0 0; font-size: 33px; font-weight: 500; letter-spacing: -.3px; color: #5192db; -webkit-text-stroke: .6px #5192db; }
.up { margin-top: -16px; }
.scroll { width: 29px; box-sizing: border-box; border-left: 2px solid #e8e8e8; background: #fafafa; padding: 828px 6px 0 5px; }
.thumb { display: block; width: 16px; height: 360px; border-radius: 8px; background: #c1c1c1; }

.dock { position: absolute; left: 84px; bottom: 0; width: 2712px; height: 128px; box-sizing: border-box; padding: 8px 8px 0; display: flex; background: #4c596b; border-radius: 12px 12px 0 0; box-shadow: 0 0 70px rgba(0, 0, 0, .16); }
.app-ico { width: 104.100px; height: 104px; overflow: visible; }
.dock-sep { width: 2px; height: 96px; margin: 8px 21px 0 24px; background: #2a3646; }
.dock-sep.second { margin: 8px 22px 0 24px; }
.petals rect { opacity: .85; mix-blend-mode: multiply; }
.tex { font-family: "Liberation Serif", serif; font-size: 37px; fill: #f6e13a; }
</style>
